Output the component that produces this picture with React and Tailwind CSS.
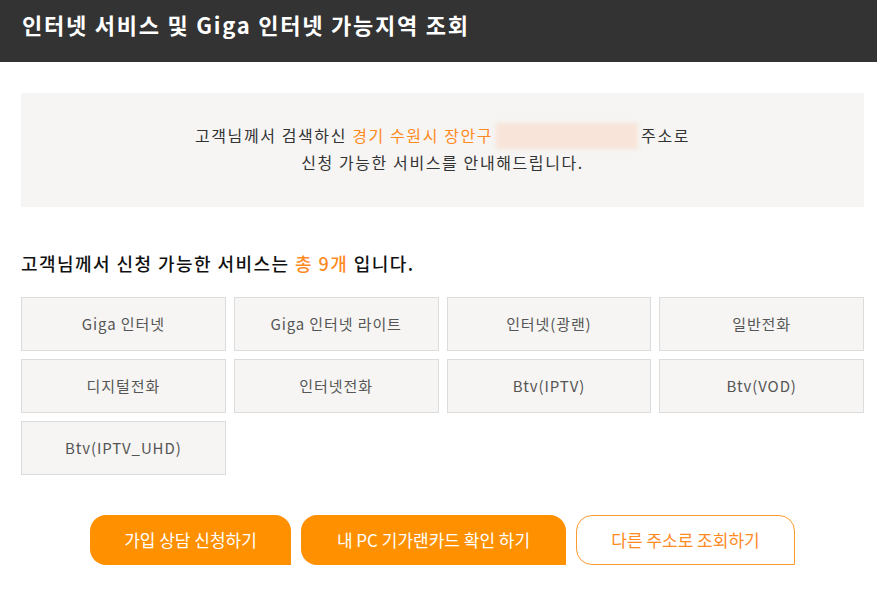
const services = [
  "Giga 인터넷",
  "Giga 인터넷 라이트",
  "인터넷(광랜)",
  "일반전화",
  "디지털전화",
  "인터넷전화",
  "Btv(IPTV)",
  "Btv(VOD)",
  "Btv(IPTV_UHD)",
];

const font = { fontFamily: '"Noto Sans CJK KR", "Noto Sans", sans-serif' };

export default function App() {
  return (
    <div className="min-h-screen bg-white" style={font}>
      {/* header */}
      <div className="h-[62px] bg-[#333333] flex items-center pl-[22px] pb-[14px]">
        <h1 className="text-white text-[22px] font-bold leading-none tracking-[0.08em]">
          인터넷 서비스 및 Giga 인터넷 가능지역 조회
        </h1>
      </div>

      <div className="ml-[21px] w-[843px] pt-[31px]">
        {/* info box */}
        <div className="bg-[#f6f5f3] h-[114px] flex flex-col items-center justify-center text-[16px] leading-[27px] text-[#333] tracking-[0.1em] pb-[2px]">
          <p className="flex items-center">
            고객님께서 검색하신&nbsp;<span className="text-[#ff8a1f]">경기 수원시 장안구</span>
            <span className="inline-block w-[142px] h-[26px] mx-[3px] bg-[#f8e4d8] blur-[2px]" />
            주소로
          </p>
          <p>신청 가능한 서비스를 안내해드립니다.</p>
        </div>

        {/* count */}
        <h2 className="mt-[47px] text-[18px] font-medium text-[#111] leading-none tracking-[0.08em]">
          고객님께서 신청 가능한 서비스는 <span className="text-[#ff8a1f]">총 9개</span> 입니다.
        </h2>

        {/* service grid */}
        <div className="mt-[25px] grid grid-cols-4 gap-[8px]">
          {services.map((s) => (
            <div
              key={s}
              className="h-[54px] bg-[#f6f5f3] border border-[#dcdcdc] flex items-center justify-center text-[15px] text-[#555] tracking-[0.06em]"
            >
              {s}
            </div>
          ))}
        </div>

        {/* actions */}
        <div className="mt-[40px] flex justify-center gap-[10px]">
          <button className="w-[201px] h-[50px] bg-[#ff9000] text-white text-[17px] rounded-tl-[16px] rounded-tr-[16px] rounded-bl-[16px]">
            가입 상담 신청하기
          </button>
          <button className="w-[265px] h-[50px] bg-[#ff9000] text-white text-[17px] rounded-tl-[16px] rounded-tr-[16px] rounded-bl-[16px]">
            내 PC 기가랜카드 확인 하기
          </button>
          <button className="w-[219px] h-[50px] bg-white border border-[#ff9a2e] text-[#ff8a1f] text-[17px] rounded-tl-[16px] rounded-tr-[16px] rounded-bl-[16px]">
            다른 주소로 조회하기
          </button>
        </div>
      </div>
    </div>
  );
}
